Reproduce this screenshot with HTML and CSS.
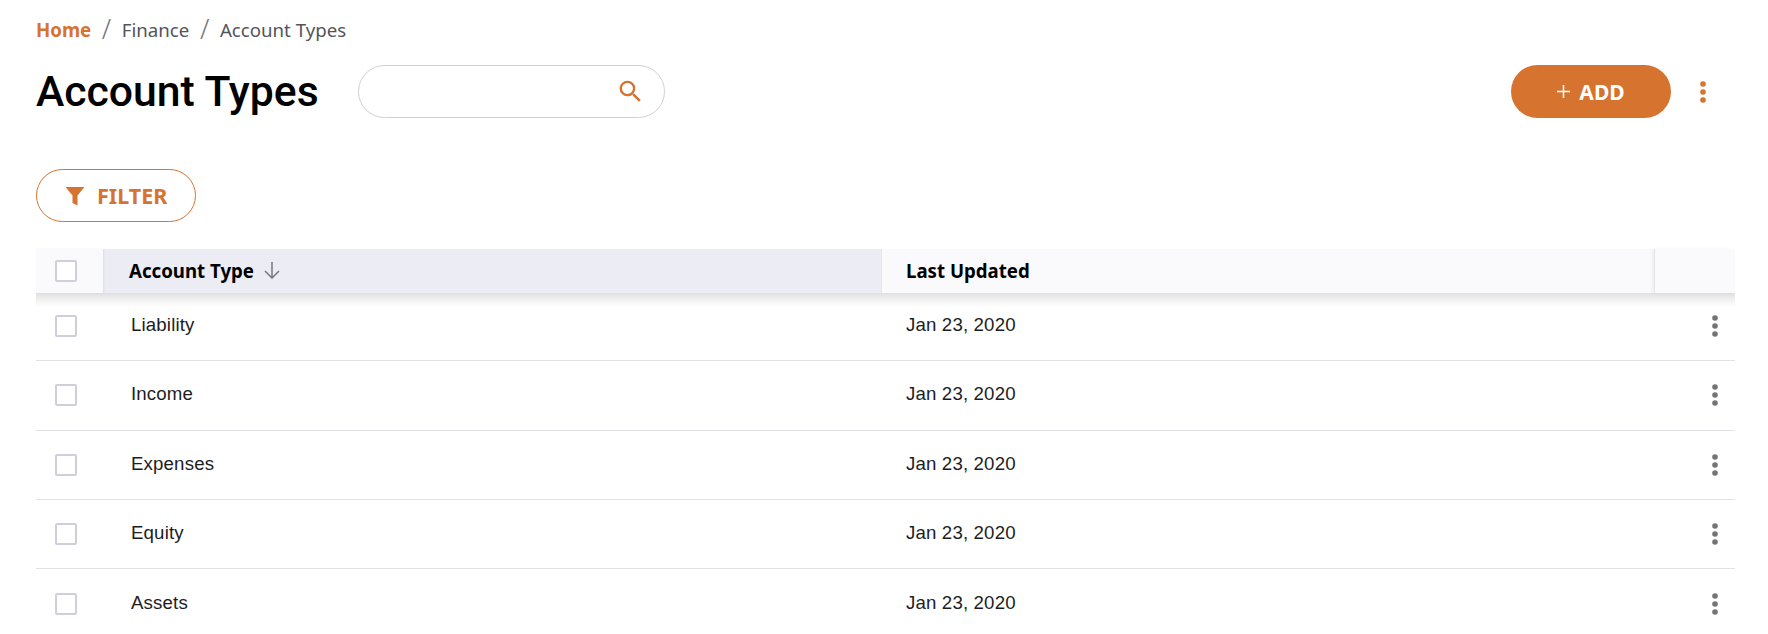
FILE: index.html
```html
<!DOCTYPE html>
<html lang="en">
<head>
<meta charset="utf-8">
<title>Account Types</title>
<link rel="stylesheet" href="styles.css">
</head>
<body>
<main class="page">
  <nav class="crumbs">
    <a class="crumb-home">Home</a><span class="crumb-sep">/</span><span>Finance</span><span class="crumb-sep">/</span><span>Account Types</span>
  </nav>
  <header class="titlebar">
    <h1 class="title">Account Types</h1>
    <div class="search">
      <svg class="search-icon" viewBox="0 0 24 24" width="29" height="29"><path d="M15.5 14h-.79l-.28-.27A6.47 6.47 0 0 0 16 9.5 6.5 6.5 0 1 0 9.5 16c1.61 0 3.09-.59 4.23-1.57l.27.28v.79l5 4.99L20.49 19l-4.99-5zm-6 0C7.01 14 5 11.99 5 9.5S7.01 5 9.5 5 14 7.01 14 9.5 11.99 14 9.5 14z"/></svg>
    </div>
    <div class="actions">
      <button class="add"><svg class="plus" viewBox="0 0 13 13" width="13" height="13"><path d="M6.500 0v13M0 6.500h13"/></svg>ADD</button>
      <svg class="kebab-top" viewBox="0 0 6 22" width="6" height="22"><circle cx="3" cy="3" r="2.800"/><circle cx="3" cy="11" r="2.800"/><circle cx="3" cy="19" r="2.800"/></svg>
    </div>
  </header>
  <button class="filter">
    <svg viewBox="0 0 20 20" width="20" height="20"><path d="M0.500 1h19l-7 8.500v10l-5-2.500v-7.500z"/></svg>
    FILTER
  </button>
  <section class="table">
    <div class="row head">
      <div class="cell check"><span class="box"></span></div>
      <div class="cell name sorted">Account Type
        <svg class="arrow" viewBox="0 0 16 17" width="16" height="17"><path d="M8 0v16M1 9l7 7 7-7" fill="none" stroke="#77777d" stroke-width="1.500"/></svg>
      </div>
      <div class="cell date">Last Updated</div>
      <div class="cell more"></div>
    </div>
    <div class="row"><div class="cell check"><span class="box"></span></div><div class="cell name">Liability</div><div class="cell date">Jan 23, 2020</div><div class="cell more"><svg viewBox="0 0 6 22" width="6" height="22"><circle cx="3" cy="3" r="2.800"/><circle cx="3" cy="11" r="2.800"/><circle cx="3" cy="19" r="2.800"/></svg></div></div>
    <div class="row"><div class="cell check"><span class="box"></span></div><div class="cell name">Income</div><div class="cell date">Jan 23, 2020</div><div class="cell more"><svg viewBox="0 0 6 22" width="6" height="22"><circle cx="3" cy="3" r="2.800"/><circle cx="3" cy="11" r="2.800"/><circle cx="3" cy="19" r="2.800"/></svg></div></div>
    <div class="row"><div class="cell check"><span class="box"></span></div><div class="cell name">Expenses</div><div class="cell date">Jan 23, 2020</div><div class="cell more"><svg viewBox="0 0 6 22" width="6" height="22"><circle cx="3" cy="3" r="2.800"/><circle cx="3" cy="11" r="2.800"/><circle cx="3" cy="19" r="2.800"/></svg></div></div>
    <div class="row"><div class="cell check"><span class="box"></span></div><div class="cell name">Equity</div><div class="cell date">Jan 23, 2020</div><div class="cell more"><svg viewBox="0 0 6 22" width="6" height="22"><circle cx="3" cy="3" r="2.800"/><circle cx="3" cy="11" r="2.800"/><circle cx="3" cy="19" r="2.800"/></svg></div></div>
    <div class="row"><div class="cell check"><span class="box"></span></div><div class="cell name">Assets</div><div class="cell date">Jan 23, 2020</div><div class="cell more"><svg viewBox="0 0 6 22" width="6" height="22"><circle cx="3" cy="3" r="2.800"/><circle cx="3" cy="11" r="2.800"/><circle cx="3" cy="19" r="2.800"/></svg></div></div>
  </section>
</main>
</body>
</html>
```
FILE: styles.css
```css
* { box-sizing: border-box; }
html, body { margin: 0; background: #fff; overflow: hidden; }
.page { height: 634px; padding: 17px 33px 0 36px; font-family: "Noto Sans", sans-serif; }
.crumbs { display: flex; align-items: center; height: 24px; font-size: 18.670px; color: #54545a; }
.crumb-home { color: #d5732f; font-weight: 700; }
.crumb-sep { margin: 0 10.600px; font-size: 27px; line-height: 24px; color: #77777d; font-weight: 300; }
.titlebar { display: flex; align-items: center; height: 53px; margin-top: 24px; }
.title { margin: 0; width: 322px; font: 500 42.700px/53px Roboto, sans-serif; color: #000; }
.search { width: 307px; height: 53px; border: 1px solid #cfcfd8; border-radius: 27px; display: flex; align-items: center; justify-content: flex-end; padding-right: 19px; }
.search-icon { fill: #d5732f; }
.actions { margin-left: auto; display: flex; align-items: center; padding-right: 29px; }
.add { display: flex; align-items: center; justify-content: center; gap: 9px; width: 160px; height: 53px; border: 0; border-radius: 27px; background: #d5732f; color: #fff; font: 700 21px "Noto Sans", sans-serif; }
.plus { stroke: #fff; stroke-width: 1.500; fill: none; }
.kebab-top { fill: #d5732f; margin-left: 29px; }
.filter { display: flex; align-items: center; gap: 12px; width: 160px; height: 53px; margin-top: 51px; padding: 0 0 0 28px; background: #fff; border: 1px solid #d5732f; border-radius: 27px; color: #d5732f; font: 700 21.500px "Noto Sans", sans-serif; }
.filter svg { fill: #d5732f; }
.table { margin-top: 27px; }
.row { display: grid; grid-template-columns: 67px 778px 773px 81px; height: 69.250px; border-bottom: 1px solid #e1e1e6; align-items: center; color: #1d1d1f; font: 400 18.670px "Liberation Sans", Arial, sans-serif; letter-spacing: .15px; }
.row:last-child { border-bottom: 0; }
.head { position: relative; height: 44px; margin-bottom: -1px; background: #fafafc; border: 0; color: #000; font: 700 18.670px "Noto Sans", sans-serif; letter-spacing: 0; }
.head::after { content: ""; position: absolute; left: 0; right: 0; top: 100%; height: 14px; background: linear-gradient(to bottom, rgba(0,0,0,.12), rgba(0,0,0,.03) 70%, rgba(0,0,0,0)); pointer-events: none; }
.cell { height: 100%; display: flex; align-items: center; }
.check { padding-left: 19px; }
.box { width: 22px; height: 22px; border: 2px solid #cfcfdb; border-radius: 2px; background: #fff; }
.name { padding: 0 0 2px 28px; }
.head .name { padding-left: 26px; gap: 10px; }
.sorted { background: #ebecf4; }
.date { padding: 0 0 2px 25px; }
.head .date { border-left: 1px solid #e6e6ec; padding-left: 24px; }
.head .check { box-shadow: 1px 0 2px rgba(0,0,0,.06); position: relative; }
.head .more { border-left: 1px solid #e3e3e8; box-shadow: -2px 0 3px rgba(0,0,0,.05); }
.more { justify-content: flex-end; padding-right: 17px; }
.more svg { fill: #747478; }
```
